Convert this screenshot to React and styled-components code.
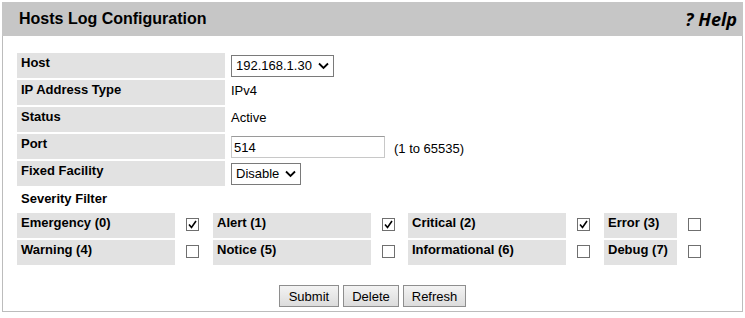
import React from "react"
import styled, { createGlobalStyle } from "styled-components"

const Global = createGlobalStyle`
  body {
    margin: 0;
    background: #fff;
    font-family: "Liberation Sans", Arial, sans-serif;
    font-size: 13px;
    color: #000;
  }
`;
const Page = styled.div`
  width: 741px;
  margin: 2px;
`;
const Header = styled.div`
  display: flex;
  justify-content: space-between;
  align-items: center;
  height: 34px;
  padding: 0 6px 0 17px;
  background: #c6c6c6;
`;
const Title = styled.h1`
  margin: 0;
  font-size: 16px;
  font-weight: bold;
  font-family: "Liberation Sans", Arial, sans-serif;
`;
const Help = styled.span`
  font-family: "Open Sans", sans-serif;
  font-style: italic;
  font-weight: 700;
  font-size: 18px;
`;
const Body = styled.div`
  border: 1px solid #bcbcbc;
  border-top: none;
  padding: 17px 14px 4px 14px;
  display: flex;
  flex-direction: column;
`;
const Form = styled.div`
  display: grid;
  grid-template-columns: 208px 1fr;
  grid-auto-rows: 25px;
  column-gap: 6px;
  row-gap: 2px;
`;
const Label = styled.div`
  background: #e2e2e2;
  font-weight: bold;
  padding: 2px 0 0 4px;
  height: 25px;
  box-sizing: border-box;
`;
const Plain = styled.div`
  font-weight: bold;
  padding: 3px 0 0 4px;
  grid-column: 1 / 3;
`;
const Value = styled.div`
  display: flex;
  align-items: center;
  gap: 9px;
  align-self: ${p => p.text ? "start" : "center"};
  margin-top: ${p => p.text ? "3px" : "0"};
`;
const Select = styled.div`
  display: flex;
  align-items: center;
  gap: 6px;
  height: 22px;
  box-sizing: border-box;
  border: 1px solid #7a7a7a;
  padding: 0 4px 0 4px;
  background: #fff;
`;
const TextBox = styled.div`
  width: 154px;
  height: 22px;
  box-sizing: border-box;
  border: 1px solid #c8c8c8;
  border-top-color: #9a9a9a;
  padding: 3px 2px;
`;
const Hint = styled.span`
  margin-top: 4px;
`;
const Severity = styled.div`
  display: grid;
  grid-template-columns: 158px 38px 158px 37px 158px 38px 73px 36px;
  grid-auto-rows: 25px;
  row-gap: 2px;
`;
const CheckCell = styled.div`
  display: flex;
  justify-content: flex-start;
  padding: 5px 0 0 11px;
  box-sizing: border-box;
`;
const Box = styled.span`
  display: flex;
  align-items: center;
  justify-content: center;
  width: 13px;
  height: 13px;
  box-sizing: border-box;
  border: 1px solid #6f6f6f;
  background: #fff;
`;
const Buttons = styled.div`
  display: flex;
  justify-content: center;
  gap: 4px;
  margin-top: 20px;
`;
const Button = styled.button`
  height: 22px;
  padding: 0 ${p => p.pad || "9px"};
  font-family: "Liberation Sans", Arial, sans-serif;
  font-size: 13px;
  color: #000;
  border: 1px solid #8e8e8e;
  border-radius: 0;
  background: linear-gradient(#f3f3f3, #dcdcdc);
`;

const Chevron = () => (
  <svg width="11" height="8" viewBox="0 0 11 8">
    <path d="M1 1.5 L5.5 6 L10 1.5" fill="none" stroke="#000" strokeWidth="1.8" />
  </svg>
);

const Check = ({ on }) => (
  <Box>
    {on && (
      <svg width="9" height="9" viewBox="0 0 9 9">
        <path d="M1 4.5 L3.5 7.5 L8 1" fill="none" stroke="#000" strokeWidth="1.6" />
      </svg>
    )}
  </Box>
);

const levels = [
  ["Emergency (0)", true], ["Alert (1)", true], ["Critical (2)", true], ["Error (3)", false],
  ["Warning (4)", false], ["Notice (5)", false], ["Informational (6)", false], ["Debug (7)", false],
];

export default () => (
  <Page>
    <Global />
    <Header>
      <Title>Hosts Log Configuration</Title>
      <Help>? Help</Help>
    </Header>
    <Body>
      <Form>
        <Label>Host</Label>
        <Value>
          <Select>192.168.1.30 <Chevron /></Select>
        </Value>
        <Label>IP Address Type</Label>
        <Value text>IPv4</Value>
        <Label>Status</Label>
        <Value text>Active</Value>
        <Label>Port</Label>
        <Value>
          <TextBox>514</TextBox>
          <Hint>(1 to 65535)</Hint>
        </Value>
        <Label>Fixed Facility</Label>
        <Value>
          <Select>Disable <Chevron /></Select>
        </Value>
        <Plain>Severity Filter</Plain>
      </Form>
      <Severity>
        {levels.map(([name, on]) => (
          <React.Fragment key={name}>
            <Label>{name}</Label>
            <CheckCell><Check on={on} /></CheckCell>
          </React.Fragment>
        ))}
      </Severity>
      <Buttons>
        <Button>Submit</Button>
        <Button pad="8px">Delete</Button>
        <Button pad="8px">Refresh</Button>
      </Buttons>
    </Body>
  </Page>
)
